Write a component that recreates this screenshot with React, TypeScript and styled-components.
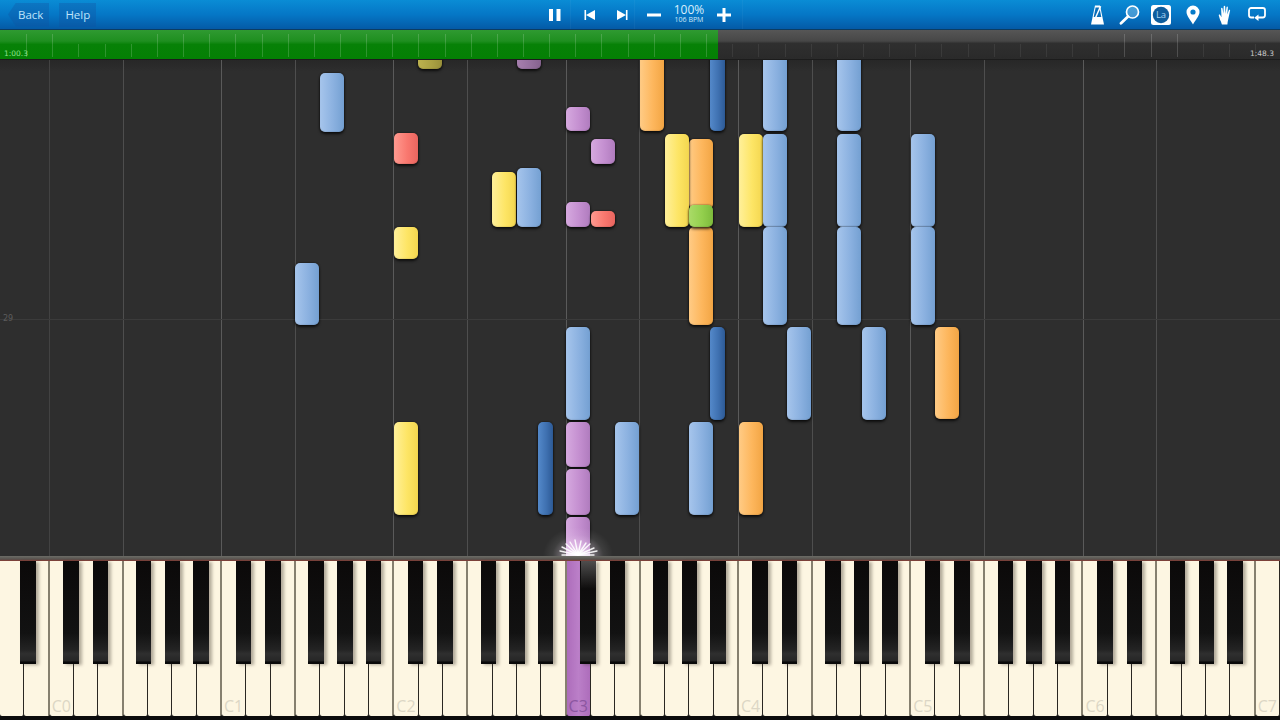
import React from 'react';
import styled, { createGlobalStyle } from 'styled-components';

const GlobalStyle = createGlobalStyle`
    html, body {
        margin: 0;
        padding: 0;
        width: 1280px;
        height: 720px;
        overflow: hidden;
        background: #2e2e2e;
        font-family: 'Open Sans', 'Liberation Sans', sans-serif;
    }
`;

const Page = styled.div`
    width: 1280px;
    height: 720px;
    display: flex;
    flex-direction: column;
    overflow: hidden;
`;

const Toolbar = styled.div`
    height: 29px;
    flex: none;
    display: grid;
    grid-template-columns: 1fr auto 1fr;
    align-items: center;
    padding: 0 8px;
    background: linear-gradient(#0a8cd5 0%, #0577c6 50%, #045aa6 100%);
    border-bottom: 1px solid #0b3c63;
    color: #ffffff;
`;

const LeftGroup = styled.div`
    display: flex;
    align-items: center;
    gap: 10px;
`;

const TextButton = styled.div<{ $back?: boolean }>`
    height: 24px;
    display: flex;
    align-items: center;
    padding: 0 6px 0 ${(p) => (p.$back ? '10px' : '6px')};
    font-size: 11.5px;
    color: #bfe4fb;
    background: rgba(20, 80, 160, 0.32);
    clip-path: ${(p) =>
        p.$back ? 'polygon(8px 0, 100% 0, 100% 100%, 8px 100%, 0 50%)' : 'none'};
`;

const CenterGroup = styled.div`
    display: flex;
    align-items: center;
    margin-left: 2px;
`;

const IconSlot = styled.div<{ $w: number; $sep?: boolean }>`
    width: ${(p) => p.$w}px;
    height: 29px;
    box-sizing: border-box;
    display: flex;
    align-items: center;
    justify-content: center;
    border-right: ${(p) => (p.$sep ? '1px solid rgba(255, 255, 255, 0.04)' : 'none')};
`;

const Speed = styled.div`
    width: 32px;
    display: flex;
    flex-direction: column;
    align-items: center;
    padding-bottom: 3px;
    white-space: nowrap;
`;

const SpeedValue = styled.span`
    font-size: 12px;
    line-height: 13px;
    color: #d8effc;
`;

const SpeedBpm = styled.span`
    font-size: 7px;
    line-height: 8px;
    color: #cfe8f8;
`;

const RightGroup = styled.div`
    display: flex;
    justify-content: flex-end;
    margin-right: -1px;
`;

const Timeline = styled.div`
    position: relative;
    height: 30px;
    flex: none;
    background: linear-gradient(#565656 0%, #474747 38%, #2f2f2f 46%, #2a2a2a 100%);
    border-bottom: 1px solid #1c1c1c;
    box-sizing: border-box;
`;

const Progress = styled.div`
    position: absolute;
    left: 0;
    top: 0;
    bottom: 0;
    width: 718px;
    background: linear-gradient(#2f9a31 0%, #1f8f20 38%, #078107 50%, #048004 100%);
`;

const Tick = styled.div<{ $tall: boolean; $bright?: boolean }>`
    position: absolute;
    top: ${(p) => (p.$tall ? '4px' : '14px')};
    bottom: 2px;
    width: 1px;
    background: rgba(255, 255, 255, ${(p) => (p.$bright ? 0.17 : 0.07)});
`;

const TimeLabel = styled.span<{ $right?: boolean }>`
    position: absolute;
    top: 19px;
    ${(p) => (p.$right ? 'right: 6px;' : 'left: 4px;')}
    font-family: 'DejaVu Sans', sans-serif;
    font-size: 7.5px;
    line-height: 9px;
    color: ${(p) => (p.$right ? '#c9c9c9' : '#8ee08e')};
`;

const Canvas = styled.div`
    position: relative;
    height: 496px;
    flex: none;
    overflow: hidden;
    background: linear-gradient(#272727, #2e2e2e 12px);
`;

const GridLine = styled.div<{ $tone: string }>`
    position: absolute;
    top: 0;
    bottom: 0;
    width: 1px;
    background: ${(p) => p.$tone};
`;

const MeasureLine = styled.div`
    position: absolute;
    left: 0;
    right: 0;
    top: 259px;
    height: 1px;
    background: #3b3b3b;
`;

const MeasureLabel = styled.span`
    position: absolute;
    left: 3px;
    top: 254px;
    font-family: 'DejaVu Sans', sans-serif;
    font-size: 8px;
    line-height: 10px;
    color: #5c5c5c;
`;

const NOTE_COLORS: Record<string, string[]> = {
    blue: ['#a6c5ec', '#8bb1e0', '#74a0d2'],
    dark: ['#5489ca', '#3f71b1', '#2d5a96'],
    yellow: ['#fff09a', '#fde565', '#f3d64f'],
    orange: ['#ffcb85', '#fdb65c', '#f2a544'],
    purple: ['#d6a9df', '#c48fd0', '#b07cbe'],
    red: ['#ff9a90', '#f9786f', '#ea655f'],
    green: ['#aadb68', '#93cf4d', '#7dbb3c'],
    olive: ['#bdb24f', '#aba243', '#98903a'],
    plum: ['#a67fae', '#95709e', '#85628e'],
};

const Note = styled.div<{ $c: string; $x: number; $y: number; $w: number; $h: number }>`
    position: absolute;
    left: ${(p) => p.$x}px;
    top: ${(p) => p.$y}px;
    width: ${(p) => p.$w}px;
    height: ${(p) => p.$h}px;
    box-sizing: border-box;
    border-radius: 5px;
    background: linear-gradient(
        90deg,
        ${(p) => NOTE_COLORS[p.$c][0]},
        ${(p) => NOTE_COLORS[p.$c][1]} 55%,
        ${(p) => NOTE_COLORS[p.$c][2]}
    );
    box-shadow: 0 2px 3px rgba(0, 0, 0, 0.7), 0 0 2px rgba(0, 0, 0, 0.6),
        inset 0 -1px 1px rgba(0, 0, 0, 0.08);
`;

const SparkGlow = styled.div`
    position: absolute;
    left: 543px;
    top: 456px;
    width: 70px;
    height: 56px;
    background: radial-gradient(
        ellipse 50% 50% at 50% 70%,
        rgba(255, 255, 255, 0.75) 0%,
        rgba(255, 235, 255, 0.4) 35%,
        rgba(255, 255, 255, 0.08) 72%,
        rgba(255, 255, 255, 0) 100%
    );
`;

const SparkRays = styled.svg`
    position: absolute;
    left: 548px;
    top: 476px;
    filter: blur(0.7px);
`;

const Rail = styled.div`
    height: 5px;
    flex: none;
    background: linear-gradient(#6c6c66 0%, #57524e 65%, #8a3a32 100%);
`;

const Keyboard = styled.div`
    position: relative;
    flex: 1;
    display: flex;
    background: #0c0c0c;
`;

const WhiteKey = styled.div<{ $active: boolean; $soft: boolean }>`
    position: relative;
    flex: 1 1 0;
    box-sizing: border-box;
    border-right: ${(p) => (p.$soft ? '2px solid #86806f' : '1px solid #2a2722')};
    border-radius: 0 0 2px 2px;
    margin-bottom: 4px;
    background: ${(p) =>
        p.$active ? 'linear-gradient(90deg, #ad6dbb, #bb7fc8 50%, #ad6dbb)' : '#fdf6e2'};
`;

const KeyLabel = styled.span<{ $active: boolean }>`
    position: absolute;
    left: 0;
    right: 0;
    bottom: 1px;
    text-align: center;
    font-size: 16px;
    line-height: 18px;
    color: ${(p) => (p.$active ? '#8b56a0' : '#dcd6c5')};
`;

const BlackKey = styled.div<{ $x: number }>`
    position: absolute;
    left: ${(p) => p.$x}px;
    top: 0;
    width: 15.5px;
    height: 103px;
    box-sizing: border-box;
    background: linear-gradient(
        #0b0909 0%,
        #121212 70%,
        #232323 86%,
        #2f2f2f 90%,
        #262626 97%,
        #090909 98%
    );
    box-shadow: 3px 1px 3px rgba(70, 60, 50, 0.4);
`;

const KeyGlow = styled.div`
    position: absolute;
    left: 581px;
    top: 0;
    width: 16px;
    height: 28px;
    background: linear-gradient(rgba(255, 255, 255, 0.28), rgba(255, 255, 255, 0));
`;

const notes: [string, number, number, number, number][] = [
    ['blue', 320, 13, 24, 59],
    ['olive', 418, -6, 24, 15],
    ['plum', 517, -6, 24, 15],
    ['orange', 640, -6, 24, 77],
    ['dark', 710, -6, 15, 77],
    ['blue', 763, -6, 24, 77],
    ['blue', 837, -6, 24, 77],
    ['purple', 566, 47, 24, 24],
    ['red', 394, 73, 24, 31],
    ['purple', 591, 79, 24, 25],
    ['orange', 689, 79, 24, 70],
    ['yellow', 665, 74, 24, 93],
    ['yellow', 739, 74, 24, 93],
    ['blue', 763, 74, 24, 93],
    ['blue', 837, 74, 24, 93],
    ['blue', 911, 74, 24, 93],
    ['yellow', 492, 112, 24, 55],
    ['blue', 517, 108, 24, 59],
    ['purple', 566, 142, 24, 25],
    ['red', 591, 151, 24, 16],
    ['orange', 689, 167, 24, 98],
    ['green', 689, 145, 24, 22],
    ['yellow', 394, 167, 24, 32],
    ['blue', 763, 167, 24, 98],
    ['blue', 837, 167, 24, 98],
    ['blue', 911, 167, 24, 98],
    ['blue', 295, 203, 24, 62],
    ['blue', 566, 267, 24, 93],
    ['dark', 710, 267, 15, 93],
    ['blue', 787, 267, 24, 93],
    ['blue', 862, 267, 24, 93],
    ['orange', 935, 267, 24, 92],
    ['yellow', 394, 362, 24, 93],
    ['dark', 538, 362, 15, 93],
    ['purple', 566, 362, 24, 45],
    ['blue', 615, 362, 24, 93],
    ['blue', 689, 362, 24, 93],
    ['orange', 739, 362, 24, 93],
    ['purple', 566, 409, 24, 46],
    ['purple', 566, 457, 24, 45],
];

const OCTAVE = 172.31;
const WHITE = 1280 / 52;

// C and F lines, one pair per octave, the C one is brighter
const gridLines: { x: number; tone: string }[] = [];
for (let o = 0; o < 7; o++) {
    const c = 49.2 + o * OCTAVE;
    gridLines.push({ x: Math.floor(c), tone: o === 0 ? '#424242' : '#5a5a5a' });
    gridLines.push({ x: Math.floor(c + 3 * WHITE), tone: '#4e4e4e' });
}

const whiteKeys = Array.from({ length: 52 }, (_, i) => {
    const fromC = i - 2;
    return fromC >= 0 && fromC % 7 === 0 ? `C${fromC / 7}` : '';
});

const blackCentres = [28];
for (let o = 0; o < 8; o++) {
    const c = 49.2 + o * OCTAVE;
    [21.8, 51.3, 94.5, 123.3, 151.8].forEach((d) => {
        const x = c + d;
        if (x < 1260) blackCentres.push(x);
    });
}

const TICK_STEP = 26.15;
const tallTicks = [1, 2, 6, 7, 8, 9, 10, 11, 12, 13, 14, 15, 16, 17, 18, 19, 20, 21, 22, 23, 24, 25, 26, 27, 43, 44, 45];
const ticks = Array.from({ length: 48 }, (_, i) => i + 1);

const Pause = () => (
    <svg width="14" height="14" viewBox="0 0 14 14">
        <rect x="1" y="1" width="4" height="12" fill="#fff" />
        <rect x="8.5" y="1" width="4" height="12" fill="#fff" />
    </svg>
);

const Prev = () => (
    <svg width="12" height="10" viewBox="0 0 12 10">
        <rect x="0.5" y="0" width="1.6" height="10" fill="#fff" />
        <path d="M11 0v10L2 5z" fill="#fff" />
    </svg>
);

const Next = () => (
    <svg width="12" height="10" viewBox="0 0 12 10">
        <rect x="9.9" y="0" width="1.6" height="10" fill="#fff" />
        <path d="M1 0v10l9-5z" fill="#fff" />
    </svg>
);

const Minus = () => (
    <svg width="14" height="14" viewBox="0 0 14 14">
        <rect x="0" y="5.5" width="14" height="3" fill="#fff" />
    </svg>
);

const Plus = () => (
    <svg width="14" height="14" viewBox="0 0 14 14">
        <rect x="0" y="5.5" width="14" height="3" fill="#fff" />
        <rect x="5.5" y="0" width="3" height="14" fill="#fff" />
    </svg>
);

const Metronome = () => (
    <svg width="13" height="20" viewBox="0 0 13 20">
        <path d="M4 0.5h5l4 19H0z" fill="#fff" />
        <path d="M4.6 2.5h3.8l1.9 9.5H2.7z" fill="#0a6fba" />
        <path d="M4.6 12.5L9.6 1.2" stroke="#fff" strokeWidth="1.5" />
    </svg>
);

const Magnifier = () => (
    <svg width="21" height="20" viewBox="0 0 21 20">
        <circle cx="13.5" cy="7" r="6" fill="rgba(255,255,255,0.25)" stroke="#fff" strokeWidth="1.7" />
        <path d="M9 11.6L2 18.2" stroke="#fff" strokeWidth="2.8" strokeLinecap="round" />
    </svg>
);

const LabelIcon = () => (
    <svg width="20" height="20" viewBox="0 0 20 20">
        <rect x="0" y="0" width="20" height="20" rx="2.5" fill="#fff" />
        <circle cx="10" cy="10" r="8.2" fill="#0f5d9c" />
        <text x="10" y="13.4" textAnchor="middle" fontSize="9.5" fontFamily="'Open Sans', sans-serif" fill="#a9d2f0">
            La
        </text>
    </svg>
);

const Pin = () => (
    <svg width="14" height="20" viewBox="0 0 14 20">
        <path
            fillRule="evenodd"
            d="M7 0.5a6.5 6.5 0 0 1 6.5 6.5c0 4-4.6 8.6-6.5 12.5-1.9-3.9-6.5-8.5-6.5-12.5a6.5 6.5 0 0 1 6.5-6.5zM7 4.4a2.6 2.6 0 1 0 0 5.2 2.6 2.6 0 0 0 0-5.2z"
            fill="#fff"
        />
    </svg>
);

const Hand = () => (
    <svg width="15" height="20" viewBox="0 0 14 20">
        <path
            d="M3.4 19.5c-.6-2-1-3.2-1.8-4.6L.3 10.6c-.3-1 .9-1.4 1.4-.6l1.3 2.2L2.6 3.4c0-1 1.3-1 1.5 0l.8 5.4.3-7.4c0-1 1.4-1 1.5 0l.3 7.4 1-6.6c.2-1 1.5-.8 1.4.2l-.6 7.2 1.5-4.4c.3-.9 1.5-.5 1.3.4l-1.5 7c-.4 2-.9 3.6-1.2 6.9z"
            fill="#fff"
        />
    </svg>
);

const Loop = () => (
    <svg width="18" height="15" viewBox="0 0 18 15">
        <path
            d="M6 10.5H3.2A2.2 2.2 0 0 1 1 8.3V3.2A2.2 2.2 0 0 1 3.2 1h11.6A2.2 2.2 0 0 1 17 3.2v5.1a2.2 2.2 0 0 1-2.2 2.2H9"
            fill="none"
            stroke="#fff"
            strokeWidth="1.8"
        />
        <path d="M10.5 7.5v6.5L6.2 10.7z" fill="#fff" />
    </svg>
);

const sparkRays = [
    'M30 19L12 15',
    'M30 19L14 11',
    'M30 19L18 8',
    'M30 19L22 6',
    'M30 19L27 4',
    'M30 19L33 5',
    'M30 19L38 7',
    'M30 19L42 8',
    'M30 19L46 12',
    'M30 19L49 15',
    'M14 19L46 19',
];

const App = () => (
    <Page>
        <GlobalStyle />
        <Toolbar>
            <LeftGroup>
                <TextButton $back>Back</TextButton>
                <TextButton>Help</TextButton>
            </LeftGroup>
            <CenterGroup>
                <IconSlot $w={32} $sep>
                    <Pause />
                </IconSlot>
                <IconSlot $w={38}>
                    <Prev />
                </IconSlot>
                <IconSlot $w={26} $sep>
                    <Next />
                </IconSlot>
                <IconSlot $w={38}>
                    <Minus />
                </IconSlot>
                <Speed>
                    <SpeedValue>100%</SpeedValue>
                    <SpeedBpm>106 BPM</SpeedBpm>
                </Speed>
                <IconSlot $w={38} $sep>
                    <Plus />
                </IconSlot>
            </CenterGroup>
            <RightGroup>
                <IconSlot $w={32}>
                    <Metronome />
                </IconSlot>
                <IconSlot $w={32}>
                    <Magnifier />
                </IconSlot>
                <IconSlot $w={32}>
                    <LabelIcon />
                </IconSlot>
                <IconSlot $w={32}>
                    <Pin />
                </IconSlot>
                <IconSlot $w={32}>
                    <Hand />
                </IconSlot>
                <IconSlot $w={32}>
                    <Loop />
                </IconSlot>
            </RightGroup>
        </Toolbar>
        <Timeline>
            <Progress />
            {ticks.map((n) => (
                <Tick
                    key={n}
                    $tall={tallTicks.includes(n)}
                    $bright={n <= 27 || (n >= 43 && n <= 45)}
                    style={{ left: Math.round(n * TICK_STEP) }}
                />
            ))}
            <TimeLabel>1:00.3</TimeLabel>
            <TimeLabel $right>1:48.3</TimeLabel>
        </Timeline>
        <Canvas>
            {gridLines.map((g) => (
                <GridLine key={g.x} $tone={g.tone} style={{ left: g.x }} />
            ))}
            <MeasureLine />
            <MeasureLabel>29</MeasureLabel>
            {notes.map(([c, x, y, w, h], i) => (
                <Note key={i} $c={c} $x={x} $y={y} $w={w} $h={h} />
            ))}
            <SparkGlow />
            <SparkRays width="60" height="20" viewBox="0 0 60 20">
                {sparkRays.map((d) => (
                    <path key={d} d={d} stroke="#fff" strokeWidth="1.4" strokeLinecap="round" opacity="0.9" />
                ))}
            </SparkRays>
        </Canvas>
        <Rail />
        <Keyboard>
            {whiteKeys.map((label, i) => (
                <WhiteKey
                    key={i}
                    $active={label === 'C3'}
                    $soft={(i - 1) % 7 === 0 || (i - 4) % 7 === 0}
                >
                    {label && <KeyLabel $active={label === 'C3'}>{label}</KeyLabel>}
                </WhiteKey>
            ))}
            {blackCentres.map((x) => (
                <BlackKey key={x} $x={x - 7.75} />
            ))}
            <KeyGlow />
        </Keyboard>
    </Page>
);

export default App;
